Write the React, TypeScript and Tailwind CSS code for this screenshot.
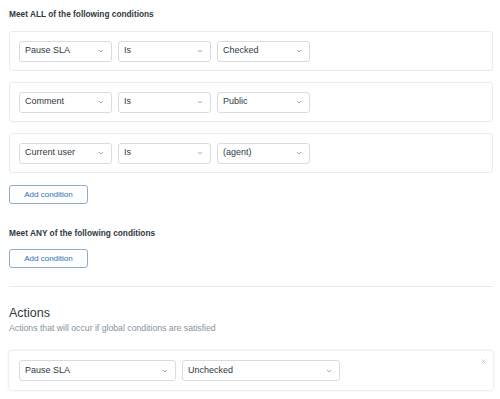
import { X } from "lucide-react";

const conditions = [
  ["Pause SLA", "Is", "Checked"],
  ["Comment", "Is", "Public"],
  ["Current user", "Is", "(agent)"],
];

function Chevron() {
  return (
    <svg width="6" height="4" viewBox="0 0 6 4" className="shrink-0">
      <path d="M1 1 L3 3 L5 1" fill="none" stroke="#8f979d" strokeWidth="0.8" />
    </svg>
  );
}

function Select({ value, width }: { value: string; width: string }) {
  return (
    <div
      className={`flex h-[21px] ${width} items-center justify-between rounded-[3px] border border-[#d8dcde] bg-white pl-[5px] pr-[7px] text-[9px] text-[#2f3941]`}
    >
      <span>{value}</span>
      <Chevron />
    </div>
  );
}

function AddButton() {
  return (
    <button className="flex h-[19px] w-[79px] items-center justify-center rounded-[3px] border border-[#8aaed0] bg-white text-[8px] text-[#1f73b7]">
      Add condition
    </button>
  );
}

export default function App() {
  return (
    <div
      className="h-[399px] w-[500px] overflow-hidden bg-white pl-[9px] pr-[7px] pt-[9px]"
      style={{ fontFamily: '"Liberation Sans", Arial, sans-serif' }}
    >
      {/* ALL conditions */}
      <h3 className="text-[8.3px] font-bold leading-[10px] text-[#2f3941]">
        Meet ALL of the following conditions
      </h3>

      <div className="mt-[12px] flex flex-col gap-[11px]">
        {conditions.map((row) => (
          <div
            key={row[0]}
            className="flex h-[40px] items-center gap-[6px] rounded-[3px] border border-[#e9ebed] pl-[9px]"
          >
            {row.map((v, i) => (
              <Select key={i} value={v} width="w-[93px]" />
            ))}
          </div>
        ))}
      </div>

      <div className="mt-[12px]">
        <AddButton />
      </div>

      {/* ANY conditions */}
      <h3 className="mt-[24px] text-[8.3px] font-bold leading-[10px] text-[#2f3941]">
        Meet ANY of the following conditions
      </h3>
      <div className="mt-[11px]">
        <AddButton />
      </div>

      <div className="mt-[18px] h-px bg-[#e9ebed]" />

      {/* ACTIONS */}
      <h2 className="mt-[18px] text-[12.5px] leading-[16px] text-[#2f3941]">Actions</h2>
      <p className="mt-[2px] text-[8.7px] leading-[10px] text-[#87929d]">
        Actions that will occur if global conditions are satisfied
      </p>

      <div className="relative mt-[18px] flex h-[39px] items-center gap-[6px] rounded-[3px] bg-white pl-[10px] shadow-[0_0_3px_rgba(0,0,0,0.18)]">
        <Select value="Pause SLA" width="w-[157px]" />
        <Select value="Unchecked" width="w-[158px]" />
        <X
          size={7}
          strokeWidth={1.5}
          className="absolute right-[6px] top-[7px] text-[#87929d]"
        />
      </div>
    </div>
  );
}
